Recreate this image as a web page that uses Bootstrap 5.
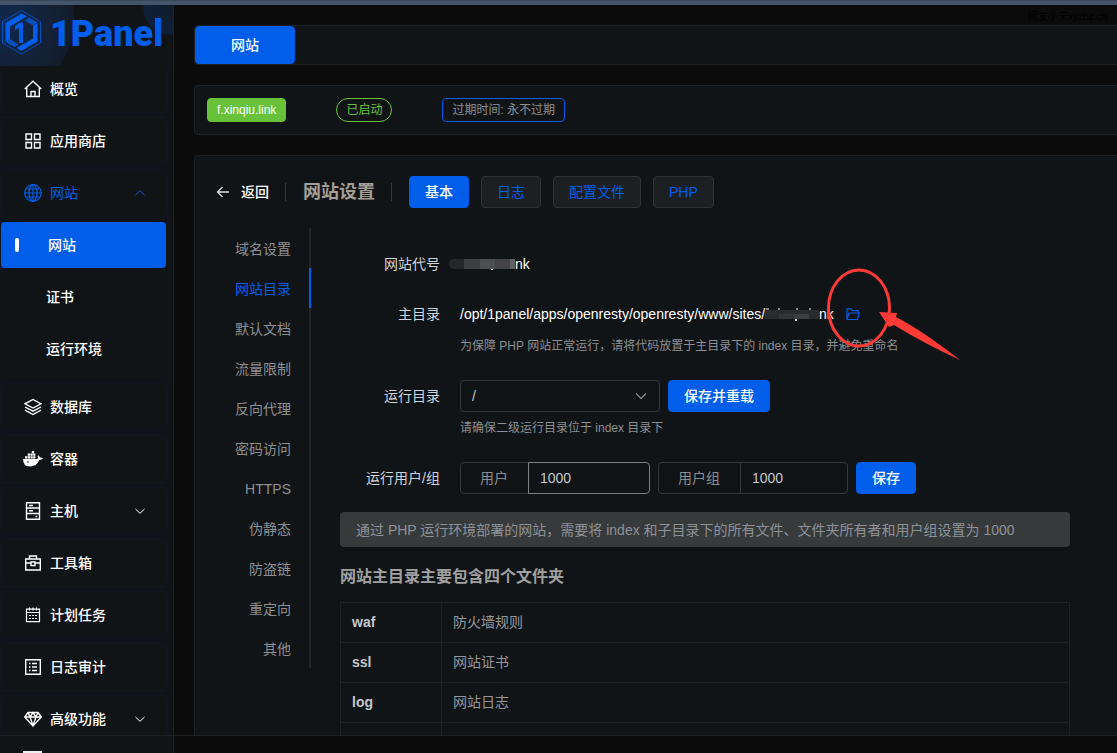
<!DOCTYPE html>
<html lang="zh-CN" data-bs-theme="dark">
<head>
<meta charset="utf-8">
<meta name="viewport" content="width=device-width, initial-scale=1">
<title>1Panel - 网站设置</title>
<link rel="stylesheet" href="https://cdn.jsdelivr.net/npm/bootstrap@5.3.0/dist/css/bootstrap.min.css">
<style>
:root{--brand:#005eeb;--panel:#111417;--line:#1e2124;--muted:#8d8f92;--ctl:#35383b}
body{font-family:"Liberation Sans","Noto Sans CJK SC",sans-serif;font-size:14px;line-height:22px;background:#0b0b0b;color:#cfd3dc}
a{text-decoration:none}
svg{flex:none;display:block}
.ico{width:18px;height:18px;fill:none;stroke:currentColor;stroke-width:1.4}
.ico.thin{stroke-width:1.2}
.top-strip{height:5px;background:#44546a;border-top:1px solid #36485a}
.sidebar{width:174px;background:var(--panel);border-right:1px solid #1e2023}
.brand-area{height:61px;padding-left:2px;color:var(--brand);background:radial-gradient(circle at 170px 3px,#111b2c 0,#10203a 26px,transparent 27px),radial-gradient(circle at 0 15px,#10294f 0,#142137 48px,#131c2b 74px,transparent 75px)}
.brand-word{font-family:Roboto,sans-serif;font-weight:900;font-size:36px;line-height:58px}
.menu-link{height:46px;margin:0 7px 6px 1px;padding:0 20px 0 23px;gap:8px;color:#fff;border-radius:4px;font-weight:500;box-shadow:0 0 4px #101a2c}
.menu-link.open{color:var(--brand);font-weight:400}
.menu-link .arrow{width:12px;height:12px;stroke-width:1;margin-left:auto}
.sub-menu{padding-bottom:6px}
.sub-menu .menu-link{padding-left:45px;box-shadow:none}
.sub-menu .menu-link.current{background:var(--brand);padding-left:14px;gap:29px}
.current::before{content:"";width:4px;height:14px;border-radius:2px;background:#fff}
.foot{height:18px;border-top:1px solid #1e2124}
.side-foot{background:var(--panel);padding:15px 0 0 23px}
.fold{width:19px;height:2px;background:#eee}
.content-area{padding-left:20px}
.watermark{height:20px;font-size:10px;line-height:24px;color:#000;padding-right:10px}
.panel{background:var(--panel);border:1px solid var(--line);border-right:0;border-radius:4px 0 0 4px}
.btn{--bs-btn-font-size:14px;--bs-btn-line-height:22px;--bs-btn-padding-y:4px;--bs-btn-padding-x:15px;--bs-btn-border-radius:4px}
.btn-primary{--bs-btn-bg:#005eeb;--bs-btn-border-color:#005eeb;--bs-btn-color:#fff;font-weight:500}
.btn-dim{--bs-btn-bg:#1d2023;--bs-btn-border-color:#303336;--bs-btn-color:#005eeb;--bs-btn-hover-color:#338bff;--bs-btn-hover-border-color:#005eeb}
.btn-tab{width:100px;height:38px}
.tabs-bar{margin-bottom:20px}
.site-row{height:50px;padding-left:12px;gap:50px;margin-bottom:20px}
.tag{font-size:12px;line-height:22px;padding:0 9px;border:1px solid var(--brand);border-radius:4px;color:var(--muted)}
.tag-name{background:#67c23a;border-color:#67c23a;color:#fff}
.tag-state{border-color:#67c23a;color:#67c23a;border-radius:12px}
.setting{padding:20px 0 0 21px;border-bottom:0;border-radius:4px 0 0 0}
.setting-body{margin-top:20px}
.back{gap:11px;color:#fff;font-weight:500}
.vline{width:1px;height:18px;background:#33363a;margin:0 17px 0 16px}
.title{font-size:18px;font-weight:700;color:#a39f96;line-height:32px}
.tab-buttons{gap:12px}
.tab-col{width:95px;margin-right:29px;border-right:2px solid #222528;align-self:flex-start}
.tab-col a{height:40px;line-height:42px;padding-right:18px;margin-right:-2px;border-right:2px solid transparent;color:var(--muted);text-align:right;display:block}
.tab-col a.on{color:var(--brand);border-color:var(--brand)}
.form-col{padding-top:20px;margin-right:47px;min-width:0}
.f-row{display:flex;gap:20px}
.alias-row{gap:9px;margin-bottom:18px}
.f-label{width:100px;line-height:32px;text-align:right;flex:none}
.f-text{line-height:32px;color:#fff;white-space:nowrap}
.hint{font-size:12px;line-height:24px;color:var(--muted);margin:4px 0 22px;white-space:nowrap}
.form-control,.form-select,.input-group-text{font-size:14px;line-height:22px;padding:4px 11px;background-color:var(--panel);border-color:var(--ctl);border-radius:4px;color:#c4c7cc}
.form-select{width:200px;background-image:url("data:image/svg+xml,%3Csvg xmlns='http://www.w3.org/2000/svg' viewBox='0 0 12 12'%3E%3Cpath fill='none' stroke='%238d9095' stroke-width='1.1' d='M1 3.5l5 5 5-5'/%3E%3C/svg%3E");background-size:12px;background-position:right 12px center}
.input-group{width:190px}
.input-group-text{padding:4px 20px 4px 19px;color:var(--muted)}
.form-control.hot{border-color:#7b7e82}
.tip{background:#373a3b;color:#8e9197;border-radius:4px;padding:6px 16px 5px;line-height:24px;margin:18px 0 17px}
.dirs-title{font-size:16px;font-weight:700;line-height:26px;margin:0 0 12px;color:#a0a0a0}
.dirs{--bs-table-bg:transparent;--bs-table-color:#94969a;border-color:#1f2225;margin:0}
.dirs>tbody>tr>*{padding:9px 11px;line-height:21px;height:40px}
.dirs th{width:101px;color:#c4c7cc}
.mark-wrap{position:relative;margin-left:12px}
.callout{position:absolute;left:-23px;top:-39px;pointer-events:none}
</style>
</head>
<body class="vh-100 d-flex flex-column overflow-hidden">
<div class="top-strip flex-shrink-0"></div>
<div class="d-flex flex-grow-1 overflow-hidden">
  <aside class="sidebar d-flex flex-column flex-shrink-0">
    <div class="brand-area d-flex flex-shrink-0">
      <svg width="40" height="54" viewBox="0 0 40 54" fill="none" stroke="#005eeb">
        <path d="M19.500 5.500L38.500 16.500V38L19.500 49L.5 38V16.500Z" stroke-width="1" opacity=".75"/>
        <path d="M19.500 8.500L25 11.500L8 21.500V34L3.500 37V18Z" fill="#005eeb" stroke="none"/>
        <path d="M19.500 46L14.500 43L31 33.500V21L35.500 18V36.500Z" fill="#005eeb" stroke="none"/>
        <path d="M27 12.500L35.500 17.500L31 20.500L22.500 15.500Z" fill="#0750bd" stroke="none"/>
        <path d="M12.500 42L3.500 37L8 34L16.500 39.500Z" fill="#0750bd" stroke="none"/>
        <path d="M13 21L18 17.500H21V38H17V23L13 25Z" fill="#005eeb" stroke="none"/>
      </svg>
      <span class="brand-word ms-2">1Panel</span>
    </div>
    <nav class="flex-grow-1 overflow-hidden">
      <a href="#" class="menu-link d-flex align-items-center"><svg class="ico" viewBox="0 0 18 18"><path d="M.7 9L9 1.300L17.300 9M2.700 7.800V16.500H15.300V7.800M7 16.500V11.500H11V16.500"/></svg>概览</a>
      <a href="#" class="menu-link d-flex align-items-center"><svg class="ico" viewBox="0 0 18 18"><path d="M2 2h5.500v5.500H2zM10.500 2H16v5.500h-5.500zM2 10.500h5.500V16H2zM10.500 10.500H16V16h-5.500z"/></svg>应用商店</a>
      <a href="#" class="menu-link open d-flex align-items-center"><svg class="ico thin" viewBox="0 0 18 18"><circle cx="9" cy="9" r="8.300"/><ellipse cx="9" cy="9" rx="4" ry="8.300"/><path d="M9 1v16M1 9h16M2.200 5h13.600M2.200 13h13.600"/></svg>网站<svg class="ico arrow" viewBox="0 0 12 12"><path d="M1.500 8L6 3.700L10.500 8"/></svg></a>
      <div class="sub-menu">
        <a href="#" class="menu-link current d-flex align-items-center">网站</a>
        <a href="#" class="menu-link d-flex align-items-center">证书</a>
        <a href="#" class="menu-link d-flex align-items-center">运行环境</a>
      </div>
      <a href="#" class="menu-link d-flex align-items-center"><svg class="ico" viewBox="0 0 18 18"><path d="M9 1.500L17 5.800L9 10L1 5.800ZM1 9L9 13.200L17 9M1 12.200L9 16.500L17 12.200"/></svg>数据库</a>
      <a href="#" class="menu-link d-flex align-items-center"><svg class="ico" viewBox="0 0 18 18" overflow="visible"><path fill="currentColor" stroke="none" d="M-1 9H12.500Q14 8.800 14 8Q13.200 6.500 14.200 5.300Q15.700 6.300 15.800 7.600Q17.800 7.300 19 8.200Q18 10 15.300 10Q12.500 16.500 6 16.500Q-1 16.500 -1 9ZM1 6.200h2.300v2.200H1zM3.700 6.200H6v2.200H3.700zM6.400 6.200h2.300v2.200H6.400zM9.100 6.200h2.300v2.200H9.100zM3.700 3.600H6v2.200H3.700zM6.400 3.600h2.300v2.200H6.400zM9.100 3.600h2.300v2.200H9.100zM7.800 1h2.300v2.200H7.800z"/><circle cx="4" cy="12" r=".8" fill="#111417" stroke="none"/></svg>容器</a>
      <a href="#" class="menu-link d-flex align-items-center"><svg class="ico" viewBox="0 0 18 18"><path d="M2.500 .8h13v16.400h-13zM2.500 6h13M2.500 11.500h13M5 3.500h4M5 8.800h4M11.500 14.500h1.800"/></svg>主机<svg class="ico arrow" viewBox="0 0 12 12"><path d="M1.500 4L6 8.300L10.500 4"/></svg></a>
      <a href="#" class="menu-link d-flex align-items-center"><svg class="ico" viewBox="0 0 18 18"><path d="M1.700 5h14.600v11H1.700zM5.500 5V2h7v3M1.700 9h5M11.300 9h5M7 8h4v3.500H7z"/></svg>工具箱</a>
      <a href="#" class="menu-link d-flex align-items-center"><svg class="ico thin" viewBox="0 0 18 18"><path d="M2.500 3.200h13v12.500h-13zM2.500 6.500h13M5.500 1.500v3M9 1.500v3M12.500 1.500v3M5 9.500h2M8 9.500h2M11 9.500h2M5 12.500h2M8 12.500h2M11 12.500h2"/></svg>计划任务</a>
      <a href="#" class="menu-link d-flex align-items-center"><svg class="ico" viewBox="0 0 18 18"><path d="M1.700 1.700h14.600v14.600H1.700zM5 5.500h1.500M8 5.500h5M5 9h1.500M8 9h5M5 12.500h1.500M8 12.500h5"/></svg>日志审计</a>
      <a href="#" class="menu-link d-flex align-items-center"><svg class="ico" viewBox="0 0 18 18"><path d="M4 2.500h10L17.300 7L9 16L.7 7ZM.7 7h16.600M4 2.500L6 7L9 15.500L12 7L14 2.500M6 7L9 2.500L12 7"/></svg>高级功能<svg class="ico arrow" viewBox="0 0 12 12"><path d="M1.500 4L6 8.300L10.500 4"/></svg></a>
    </nav>
    <div class="foot side-foot flex-shrink-0"><div class="fold"></div></div>
  </aside>

  <main class="d-flex flex-column flex-grow-1 overflow-hidden">
    <div class="content-area flex-grow-1 overflow-hidden d-flex flex-column">
      <div class="watermark text-end flex-shrink-0">网友小宋xyzbz.cn</div>
      <div class="panel flex-shrink-0 tabs-bar"><button type="button" class="btn btn-primary btn-tab">网站</button></div>
      <section class="panel site-row d-flex align-items-center flex-shrink-0">
        <span class="tag tag-name">f.xinqiu.link</span>
        <span class="tag tag-state">已启动</span>
        <span class="tag">过期时间: 永不过期</span>
      </section>
      <section class="panel setting flex-grow-1 overflow-hidden">
        <header class="d-flex align-items-center">
          <a href="#" class="back d-flex align-items-center"><svg width="14" height="14" viewBox="0 0 14 14" fill="none" stroke="#ddd" stroke-width="1.300"><path d="M13 7H1.500M6.500 2L1.500 7L6.500 12"/></svg>返回</a>
          <span class="vline"></span>
          <h1 class="title m-0">网站设置</h1>
          <span class="vline"></span>
          <div class="d-flex tab-buttons">
            <button type="button" class="btn btn-primary">基本</button>
            <button type="button" class="btn btn-dim">日志</button>
            <button type="button" class="btn btn-dim">配置文件</button>
            <button type="button" class="btn btn-dim">PHP</button>
          </div>
        </header>
        <div class="d-flex setting-body">
          <nav class="tab-col flex-shrink-0">
            <a href="#">域名设置</a><a href="#" class="on">网站目录</a><a href="#">默认文档</a><a href="#">流量限制</a><a href="#">反向代理</a><a href="#">密码访问</a><a href="#">HTTPS</a><a href="#">伪静态</a><a href="#">防盗链</a><a href="#">重定向</a><a href="#">其他</a>
          </nav>
          <form class="form-col flex-grow-1">
            <div class="f-row alias-row">
              <span class="f-label">网站代号</span>
              <div class="f-text d-flex align-items-center">
                <svg width="66" height="12" viewBox="0 0 66 12"><rect x="0" y="1" width="30" height="10" rx="5" fill="#25282b"/><path fill="#3c3f42" d="M15 1h16v10H15z"/><path fill="#4c4f52" d="M31 1h15v10H31z"/><path fill="#444446" d="M46 1h15v10H46z"/><path fill="#606163" d="M61 1h5v10h-5z"/><path fill="#ddd" d="M42 11h2v1h-2z"/></svg><span>nk</span>
              </div>
            </div>
            <div class="f-row">
              <span class="f-label">主目录</span>
              <div>
                <div class="f-text d-flex align-items-center">
                  <span>/opt/1panel/apps/openresty/openresty/www/sites/</span>
                  <svg width="54" height="14" viewBox="0 0 54 14"><path fill="#85888a" d="M1 1h3v2H1zM13 1h2v2h-2zM31 1h2v2h-2zM44 1h2v2h-2z"/><path fill="#292c2e" d="M0 3h54v9H0z"/><path fill="#333638" d="M14 7h15v5H14z"/><path fill="#3b3e40" d="M29 7h15v5H29z"/><path fill="#ddd" d="M30 12h2v2h-2z"/></svg>
                  <span>nk</span>
                  <span class="mark-wrap">
                    <svg width="14" height="14" viewBox="0 0 14 14" fill="none" stroke="#005eeb" stroke-width="1.200"><path d="M1 12.500V1.800H5L6.500 3.600H12V6M1 12.500H11.500L13.200 6H3L1 12.500Z"/></svg>
                    <svg class="callout" width="140" height="94" viewBox="0 0 140 94"><ellipse cx="36" cy="40" rx="30.500" ry="38" fill="none" stroke="#fd3a36" stroke-width="3"/><path fill="#fd3a36" d="M56 44L74 45L73 49Q100 63 137 92Q102 76 71 57L66 59Z"/></svg>
                  </span>
                </div>
                <p class="hint">为保障 PHP 网站正常运行，请将代码放置于主目录下的 index 目录，并避免重命名</p>
              </div>
            </div>
            <div class="f-row">
              <label class="f-label" for="runDir">运行目录</label>
              <div>
                <div class="d-flex gap-2"><select id="runDir" class="form-select"><option>/</option></select><button type="button" class="btn btn-primary">保存并重载</button></div>
                <p class="hint">请确保二级运行目录位于 index 目录下</p>
              </div>
            </div>
            <div class="f-row">
              <label class="f-label" for="user">运行用户/组</label>
              <div class="d-flex gap-2">
                <div class="input-group"><label class="input-group-text" for="user">用户</label><input id="user" class="form-control hot" value="1000"></div>
                <div class="input-group"><label class="input-group-text" for="group">用户组</label><input id="group" class="form-control" value="1000"></div>
                <button type="button" class="btn btn-primary">保存</button>
              </div>
            </div>
            <div class="tip">通过 PHP 运行环境部署的网站，需要将 index 和子目录下的所有文件、文件夹所有者和用户组设置为 1000</div>
            <h2 class="dirs-title">网站主目录主要包含四个文件夹</h2>
            <table class="table table-bordered dirs">
              <tbody>
                <tr><th scope="row">waf</th><td>防火墙规则</td></tr>
                <tr><th scope="row">ssl</th><td>网站证书</td></tr>
                <tr><th scope="row">log</th><td>网站日志</td></tr>
                <tr><td></td><td></td></tr>
              </tbody>
            </table>
          </form>
        </div>
      </section>
    </div>
    <div class="foot flex-shrink-0"></div>
  </main>
</div>
<script src="https://cdn.jsdelivr.net/npm/bootstrap@5.3.0/dist/js/bootstrap.bundle.min.js"></script>
</body>
</html>
